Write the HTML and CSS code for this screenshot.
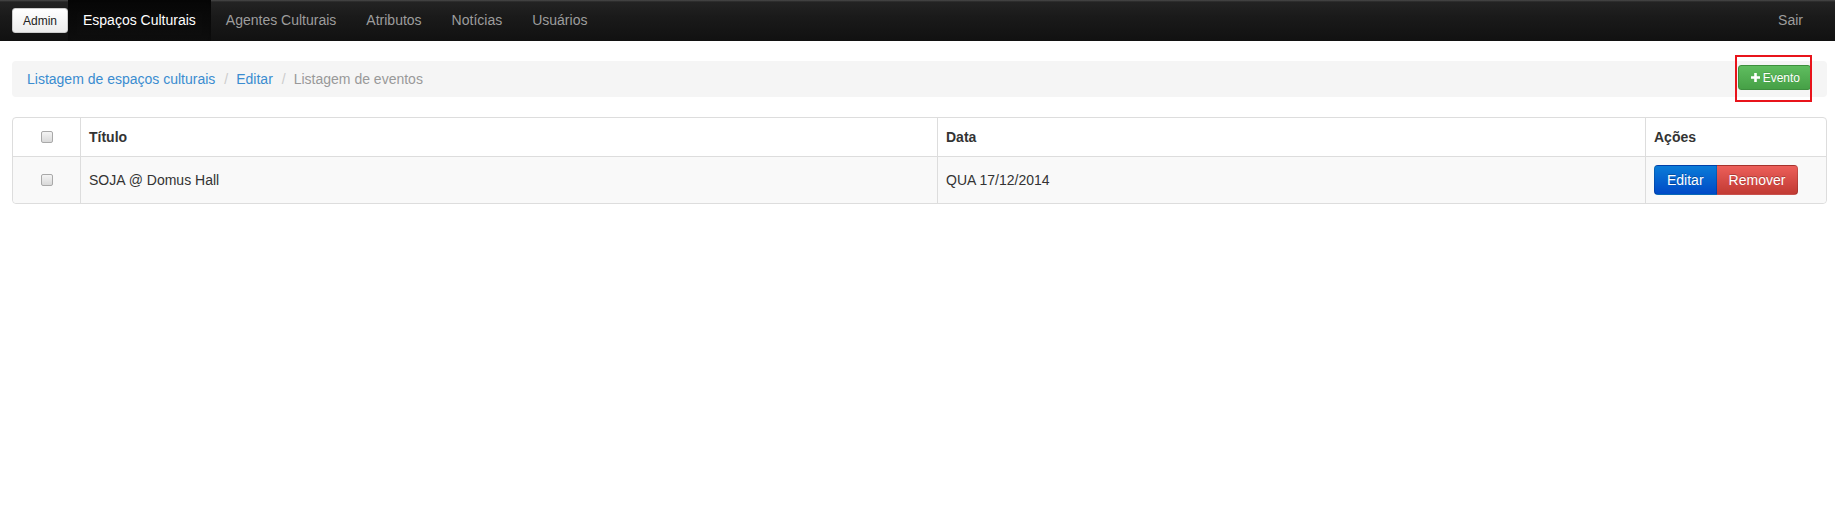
FILE: index.html
```html
<!DOCTYPE html>
<html lang="pt-BR">
<head>
<meta charset="utf-8">
<title>Listagem de eventos</title>
<link rel="stylesheet" href="styles.css">
</head>
<body>
<nav class="navbar">
  <div class="nav-left">
    <a class="brand-btn" href="#">Admin</a>
    <ul class="nav">
      <li class="active"><a href="#">Espaços Culturais</a></li>
      <li><a href="#">Agentes Culturais</a></li>
      <li><a href="#">Atributos</a></li>
      <li><a href="#">Notícias</a></li>
      <li><a href="#">Usuários</a></li>
    </ul>
  </div>
  <ul class="nav nav-right">
    <li><a href="#">Sair</a></li>
  </ul>
</nav>

<main class="content">
  <div class="breadcrumb">
    <ol class="crumbs">
      <li><a href="#">Listagem de espaços culturais</a></li>
      <li class="sep">/</li>
      <li><a href="#">Editar</a></li>
      <li class="sep">/</li>
      <li class="current">Listagem de eventos</li>
    </ol>
    <a class="btn-success" href="#">
      <svg class="plus" viewBox="0 0 9 9" width="9" height="9"><path d="M3.2 0h2.6v3.2H9v2.6H5.8V9H3.2V5.8H0V3.2h3.2z" fill="#fff"/></svg>
      <span>Evento</span>
      <span class="highlight"></span>
    </a>
  </div>

  <table class="table">
    <thead>
      <tr>
        <th class="col-check"><span class="checkbox"></span></th>
        <th class="col-title">Título</th>
        <th class="col-date">Data</th>
        <th class="col-actions">Ações</th>
      </tr>
    </thead>
    <tbody>
      <tr>
        <td class="col-check"><span class="checkbox"></span></td>
        <td>SOJA @ Domus Hall</td>
        <td>QUA 17/12/2014</td>
        <td>
          <div class="btn-group">
            <a class="btn btn-primary" href="#">Editar</a>
            <a class="btn btn-danger" href="#">Remover</a>
          </div>
        </td>
      </tr>
    </tbody>
  </table>
</main>
</body>
</html>
```

FILE: styles.css
```css
* { box-sizing: border-box; }

body {
  margin: 0;
  font-family: "Liberation Sans", Arial, sans-serif;
  font-size: 14px;
  line-height: 20px;
  color: #333;
  background: #fff;
}

a { text-decoration: none; }

.navbar {
  height: 41px;
  display: flex;
  justify-content: space-between;
  align-items: stretch;
  padding: 0 17px 0 12px;
  background: linear-gradient(to bottom, #4a4a4a 0, #232323 2px, #1a1a1a 40%, #111 100%);
}

.nav-left {
  display: flex;
  align-items: stretch;
}

.brand-btn {
  align-self: flex-start;
  margin-top: 8px;
  height: 25px;
  width: 56px;
  display: flex;
  align-items: center;
  justify-content: center;
  font-size: 12px;
  color: #222;
  background: linear-gradient(to bottom, #ffffff 0, #ececec 100%);
  border-radius: 3px;
  border: 1px solid #ccc;
}

.nav {
  list-style: none;
  margin: 0;
  padding: 0;
  display: flex;
}

.nav li a {
  display: block;
  padding: 0 15px;
  line-height: 41px;
  color: #9d9d9d;
  font-size: 14px;
}

.nav li.active a {
  color: #fff;
  background: linear-gradient(to bottom, #070707 0, #0e0e0e 100%);
  box-shadow: inset 0 3px 9px rgba(0, 0, 0, 0.25);
}

.content {
  padding: 20px 8px 0 12px;
}

.breadcrumb {
  height: 36px;
  display: flex;
  align-items: center;
  justify-content: space-between;
  padding: 0 16px 0 15px;
  background: #f5f5f5;
  border-radius: 4px;
}

.crumbs {
  list-style: none;
  margin: 0;
  padding: 0;
  display: flex;
  gap: 0;
}

.crumbs a { color: #3a8cd0; }
.crumbs .sep { color: #ccc; padding: 0 8px 0 9px; }
.crumbs .current { color: #999; }

.btn-success {
  position: relative;
  height: 25px;
  display: flex;
  align-items: center;
  gap: 3px;
  padding: 0 10px 0 12px;
  margin-top: -3px;
  font-size: 12px;
  color: #fff;
  background: linear-gradient(to bottom, #5fbd5f 0, #46a046 100%);
  border: 1px solid #3e8f3e;
  border-radius: 3px;
  text-shadow: 0 -1px 0 rgba(0, 0, 0, 0.15);
}

.plus { display: block; }

.highlight {
  position: absolute;
  left: -4px;
  right: -2px;
  top: -11px;
  bottom: -13px;
  border: 2px solid #e8141b;
  pointer-events: none;
}

.table {
  margin-top: 20px;
  width: 100%;
  border-collapse: separate;
  border-spacing: 0;
  border: 1px solid #ddd;
  border-radius: 4px;
}

.table th,
.table td {
  text-align: left;
  vertical-align: middle;
  border-left: 1px solid #ddd;
}

.table th:first-child,
.table td:first-child { border-left: 0; }

.table th {
  padding: 9px 8px 9px;
  font-weight: bold;
}

.table td {
  padding: 8px 8px 8px;
  border-top: 1px solid #ddd;
  background: #f9f9f9;
}

.table tbody tr:last-child td:first-child { border-bottom-left-radius: 4px; }
.table tbody tr:last-child td:last-child { border-bottom-right-radius: 4px; }

.table .col-check { width: 67px; text-align: center; padding-left: 0; padding-right: 0; }
.table .col-title { width: 857px; }
.table .col-date { width: 708px; }

.checkbox {
  display: inline-block;
  width: 12px;
  height: 12px;
  vertical-align: middle;
  border: 1px solid #a9a9a9;
  border-radius: 2px;
  background: linear-gradient(to bottom, #f4f4f4 0, #d9d9d9 100%);
  position: relative;
  top: -1px;
}

.btn-group {
  display: flex;
}

.btn {
  display: block;
  height: 30px;
  line-height: 28px;
  padding: 0 12px;
  font-size: 14px;
  color: #fff;
  text-shadow: 0 -1px 0 rgba(0, 0, 0, 0.25);
  border: 1px solid rgba(0, 0, 0, 0.15);
}

.btn-primary {
  background: linear-gradient(to bottom, #0a7cd8 0, #0049c6 100%);
  border-radius: 4px 0 0 4px;
}

.btn-danger {
  background: linear-gradient(to bottom, #ec5f5a 0, #c13a33 100%);
  border-radius: 0 4px 4px 0;
  border-left: 0;
}
```
